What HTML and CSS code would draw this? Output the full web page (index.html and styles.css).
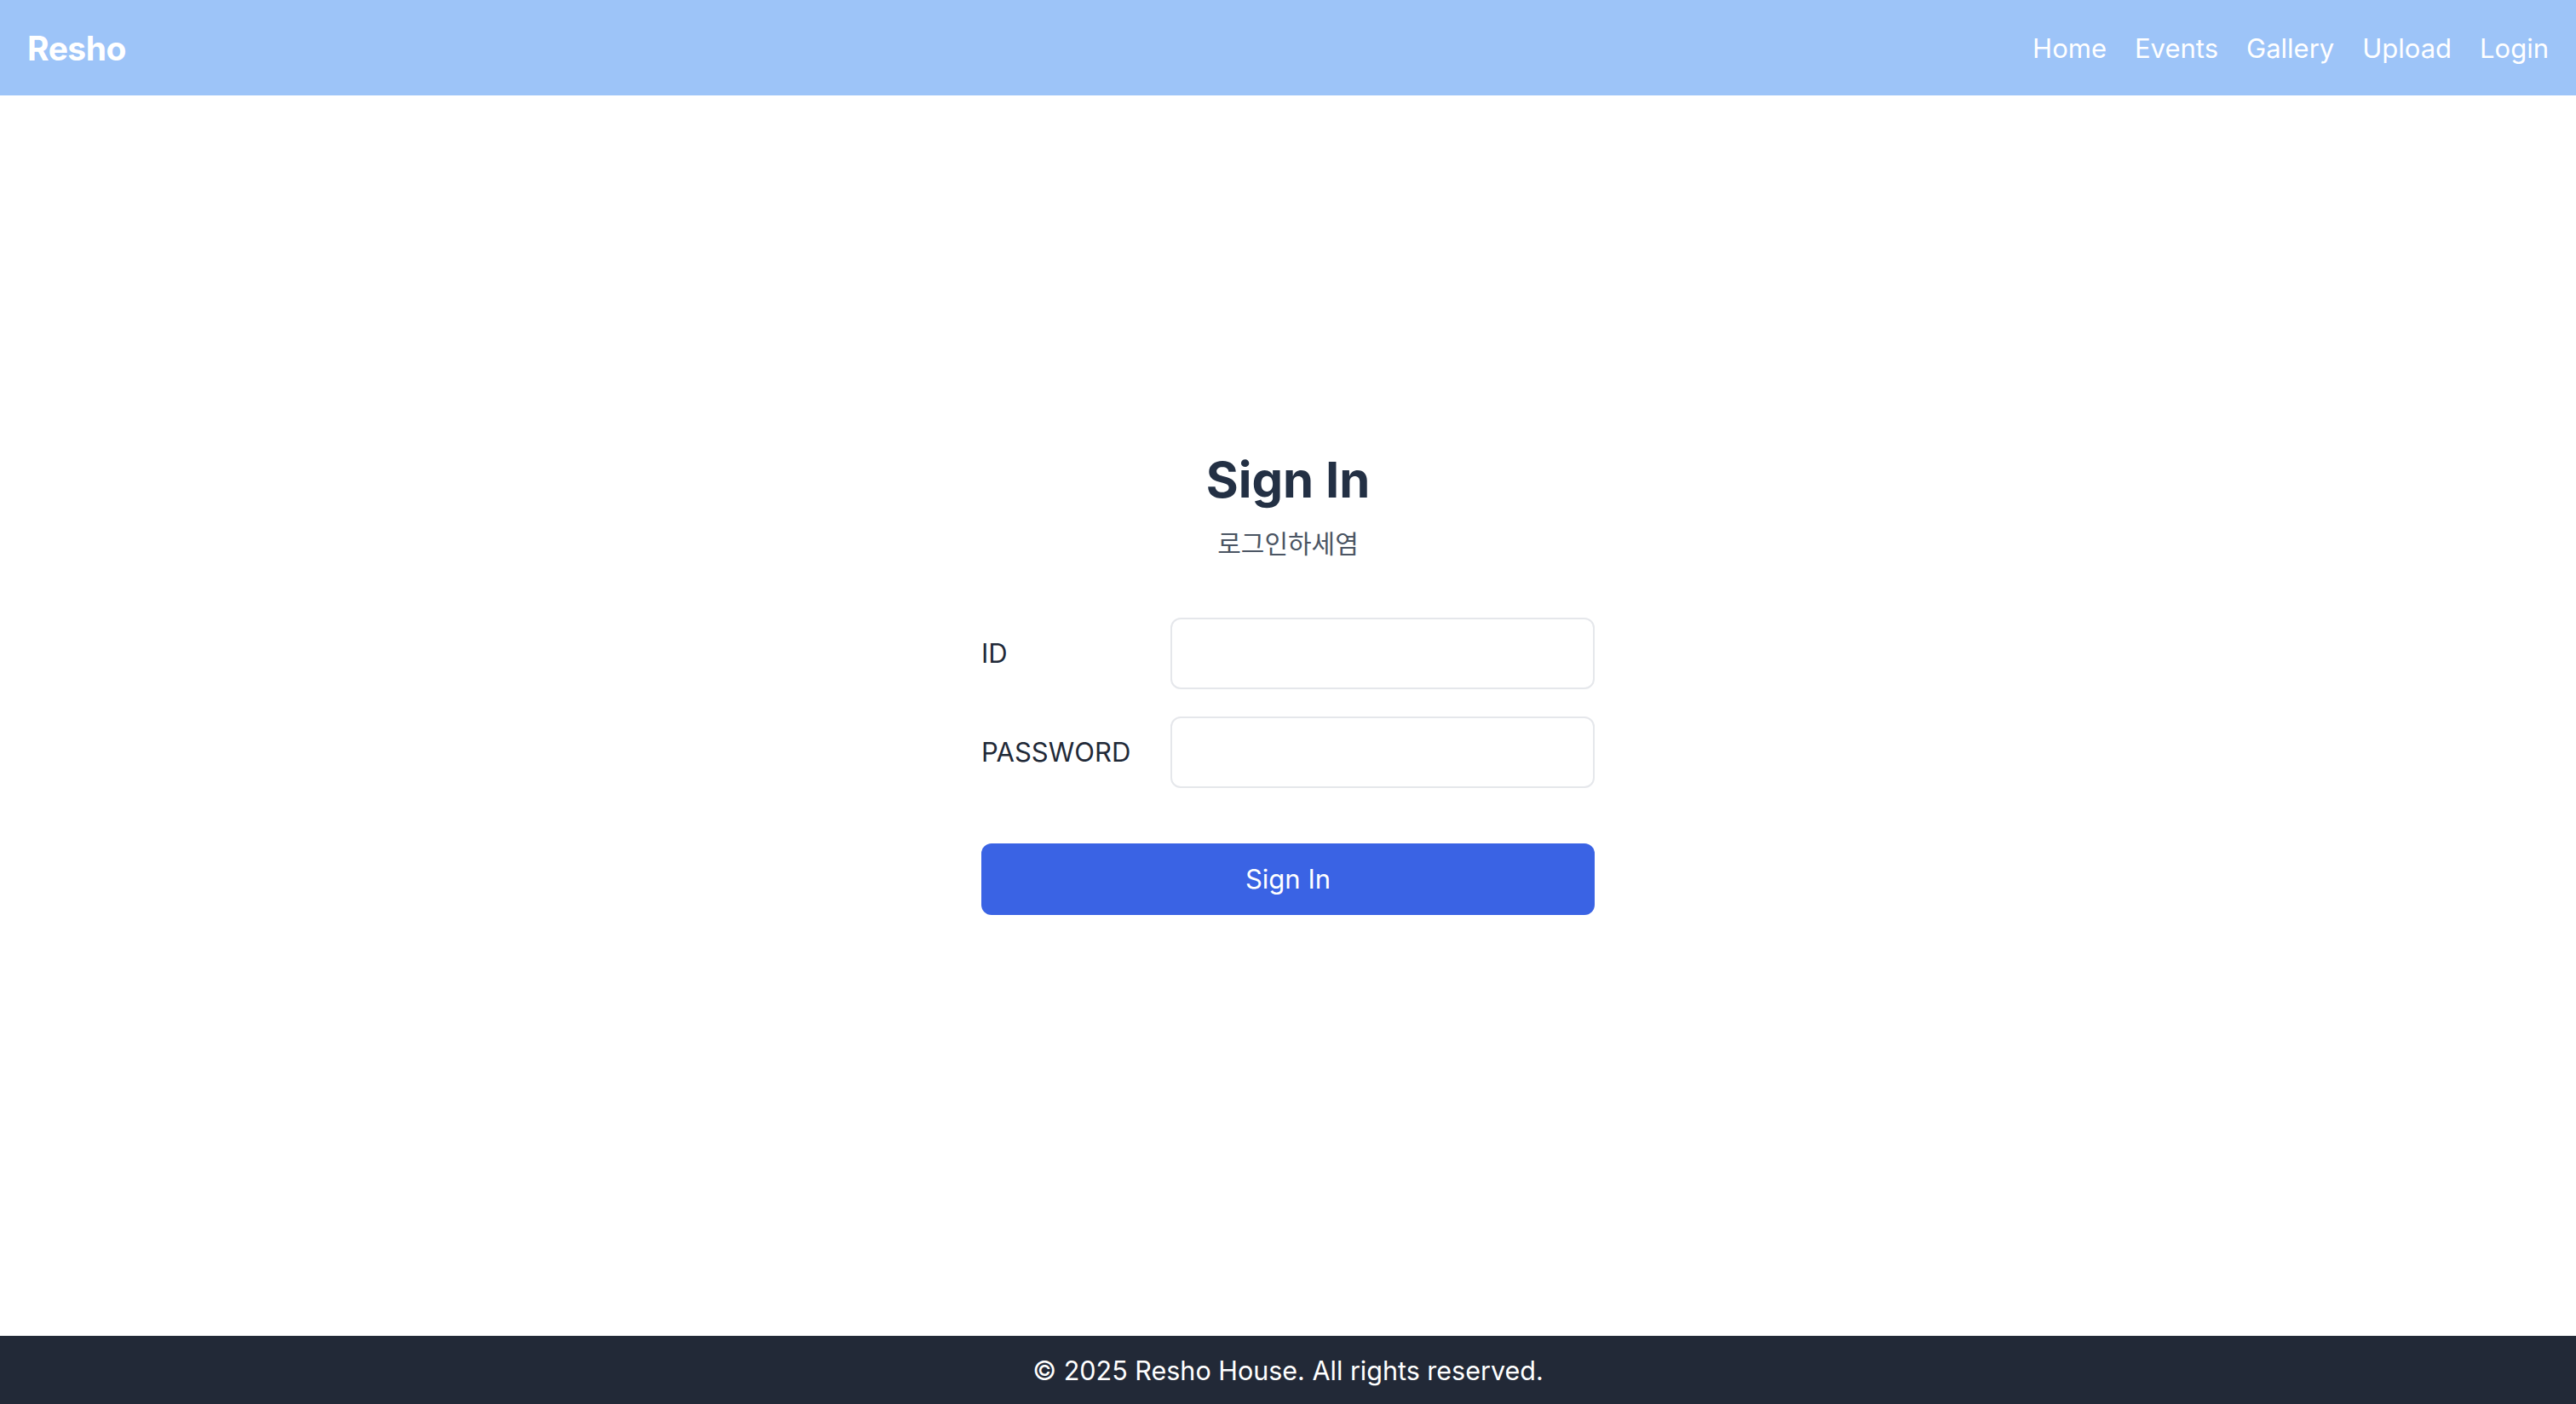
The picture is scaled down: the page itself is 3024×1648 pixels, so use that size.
FILE: index.html
```html
<!DOCTYPE html>
<html lang="ko">
<head>
<meta charset="utf-8">
<title>Resho - Sign In</title>
<link rel="stylesheet" href="styles.css">
</head>
<body>
<header class="topbar">
  <a class="logo" href="#">Resho</a>
  <nav class="nav">
    <a href="#">Home</a>
    <a href="#">Events</a>
    <a href="#">Gallery</a>
    <a href="#">Upload</a>
    <a href="#">Login</a>
  </nav>
</header>
<main class="main">
  <section class="card">
    <h1 class="title">Sign In</h1>
    <p class="subtitle">로그인하세염</p>
    <form class="form">
      <div class="field">
        <label class="label" for="id">ID</label>
        <input class="input" id="id" type="text">
      </div>
      <div class="field">
        <label class="label" for="pw">PASSWORD</label>
        <input class="input" id="pw" type="password">
      </div>
      <button class="btn" type="button">Sign In</button>
    </form>
  </section>
</main>
<footer class="footer">© 2025 Resho House. All rights reserved.</footer>
</body>
</html>
```
FILE: styles.css
```css
html, body {
  margin: 0;
  padding: 0;
}
body {
  font-family: Inter, "Noto Sans", "Noto Sans CJK KR", sans-serif;
  min-height: 100vh;
  display: flex;
  flex-direction: column;
  background: #ffffff;
}
.topbar {
  height: 112px;
  background: #9dc4f8;
  padding: 0 32px;
  display: flex;
  align-items: center;
  justify-content: space-between;
  box-sizing: border-box;
}
.logo {
  color: #ffffff;
  font-size: 39px;
  font-weight: 700;
  text-decoration: none;
  letter-spacing: -0.5px;
}
.nav {
  display: flex;
  gap: 33px;
}
.nav a {
  color: #ffffff;
  font-size: 31px;
  text-decoration: none;
}
.main {
  flex: 1;
  display: flex;
  justify-content: center;
  align-items: center;
  padding-bottom: 80px;
}
.card {
  width: 720px;
}
.title {
  margin: 0;
  text-align: center;
  font-size: 58px;
  line-height: 72px;
  font-weight: 700;
  color: #233044;
}
.subtitle {
  margin: 16px 0 0;
  text-align: center;
  font-family: "Noto Sans CJK KR", sans-serif;
  font-size: 30px;
  line-height: 42px;
  color: #4b5563;
}
.form {
  margin-top: 68px;
  display: flex;
  flex-direction: column;
  gap: 32px;
}
.field {
  display: grid;
  grid-template-columns: 222px minmax(0, 1fr);
  align-items: center;
}
.label {
  font-size: 31px;
  color: #1f2937;
}
.input {
  width: 100%;
  min-width: 0;
  height: 84px;
  box-sizing: border-box;
  border: 2px solid #e5e7eb;
  border-radius: 12px;
  padding: 0 20px;
  font-size: 30px;
  font-family: inherit;
  outline: none;
}
.btn {
  margin-top: 33px;
  height: 84px;
  border: none;
  border-radius: 12px;
  background: #3a63e4;
  color: #ffffff;
  font-family: inherit;
  font-size: 31px;
}
.footer {
  height: 80px;
  background: #222937;
  color: #ffffff;
  font-size: 30.5px;
  display: flex;
  align-items: center;
  justify-content: center;
}
```
